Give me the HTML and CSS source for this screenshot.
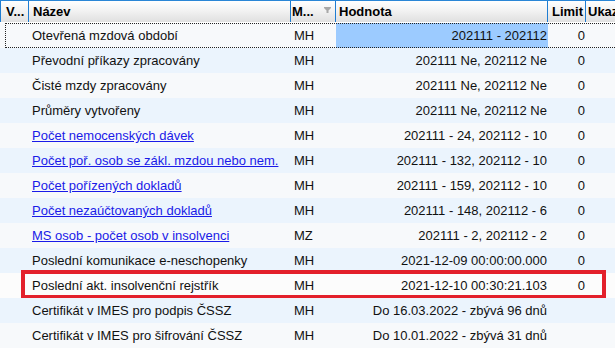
FILE: index.html
```html
<!DOCTYPE html>
<html lang="cs">
<head>
  <meta charset="UTF-8" />
  <title>Ukazatele</title>
  <link rel="stylesheet" href="styles.css">
</head>
<body>
<div class="grid">
  <div class="row head">
    <div class="cell">V...</div>
    <div class="cell">Název</div>
    <div class="cell">M...
      <svg class="filter" width="7" height="6" viewBox="0 0 7 6"><path d="M0 0h7v1L4.5 3.5V6h-2V3.5L0 1z" fill="#a8a8a8"/></svg>
    </div>
    <div class="cell">Hodnota</div>
    <div class="cell">Limit</div>
    <div class="cell">Ukazatel</div>
  </div>
  <div class="rows">
    <div class="row light focus">
      <div class="cell"></div>
      <div class="cell">Otevřená mzdová období</div>
      <div class="cell">MH</div>
      <div class="cell num sel">202111 - 202112</div>
      <div class="cell num">0</div>
      <div class="cell"></div>
    </div>
    <div class="row blue">
      <div class="cell"></div>
      <div class="cell">Převodní příkazy zpracovány</div>
      <div class="cell">MH</div>
      <div class="cell num">202111 Ne, 202112 Ne</div>
      <div class="cell num">0</div>
      <div class="cell"></div>
    </div>
    <div class="row light">
      <div class="cell"></div>
      <div class="cell">Čisté mzdy zpracovány</div>
      <div class="cell">MH</div>
      <div class="cell num">202111 Ne, 202112 Ne</div>
      <div class="cell num">0</div>
      <div class="cell"></div>
    </div>
    <div class="row blue">
      <div class="cell"></div>
      <div class="cell">Průměry vytvořeny</div>
      <div class="cell">MH</div>
      <div class="cell num">202111 Ne, 202112 Ne</div>
      <div class="cell num">0</div>
      <div class="cell"></div>
    </div>
    <div class="row light">
      <div class="cell"></div>
      <div class="cell"><a href="#">Počet nemocenských dávek</a></div>
      <div class="cell">MH</div>
      <div class="cell num">202111 - 24, 202112 - 10</div>
      <div class="cell num">0</div>
      <div class="cell"></div>
    </div>
    <div class="row blue">
      <div class="cell"></div>
      <div class="cell"><a href="#">Počet poř. osob se zákl. mzdou nebo nem.</a></div>
      <div class="cell">MH</div>
      <div class="cell num">202111 - 132, 202112 - 10</div>
      <div class="cell num">0</div>
      <div class="cell"></div>
    </div>
    <div class="row light">
      <div class="cell"></div>
      <div class="cell"><a href="#">Počet pořízených dokladů</a></div>
      <div class="cell">MH</div>
      <div class="cell num">202111 - 159, 202112 - 10</div>
      <div class="cell num">0</div>
      <div class="cell"></div>
    </div>
    <div class="row blue">
      <div class="cell"></div>
      <div class="cell"><a href="#">Počet nezaúčtovaných dokladů</a></div>
      <div class="cell">MH</div>
      <div class="cell num">202111 - 148, 202112 - 6</div>
      <div class="cell num">0</div>
      <div class="cell"></div>
    </div>
    <div class="row light">
      <div class="cell"></div>
      <div class="cell"><a href="#">MS osob - počet osob v insolvenci</a></div>
      <div class="cell">MZ</div>
      <div class="cell num">202111 - 2, 202112 - 2</div>
      <div class="cell num">0</div>
      <div class="cell"></div>
    </div>
    <div class="row blue">
      <div class="cell"></div>
      <div class="cell">Poslední komunikace e-neschopenky</div>
      <div class="cell">MH</div>
      <div class="cell num">2021-12-09 00:00:00.000</div>
      <div class="cell num">0</div>
      <div class="cell"></div>
    </div>
    <div class="row white marked">
      <div class="cell"></div>
      <div class="cell">Poslední akt. insolvenční rejstřík</div>
      <div class="cell">MH</div>
      <div class="cell num">2021-12-10 00:30:21.103</div>
      <div class="cell num">0</div>
      <div class="cell"></div>
    </div>
    <div class="row blue">
      <div class="cell"></div>
      <div class="cell">Certifikát v IMES pro podpis ČSSZ</div>
      <div class="cell">MH</div>
      <div class="cell num">Do 16.03.2022 - zbývá 96 dnů</div>
      <div class="cell num"></div>
      <div class="cell"></div>
    </div>
    <div class="row light">
      <div class="cell"></div>
      <div class="cell">Certifikát v IMES pro šifrování ČSSZ</div>
      <div class="cell">MH</div>
      <div class="cell num">Do 10.01.2022 - zbývá 31 dnů</div>
      <div class="cell num"></div>
      <div class="cell"></div>
    </div>
  </div>
</div>
</body>
</html>
```

FILE: styles.css
```css
* { box-sizing: border-box; margin: 0; padding: 0; }
html, body { width: 100%; height: 100%; background: #fff; overflow: hidden; }
body { font-family: "Liberation Sans", Arial, sans-serif; font-size: 13px; color: #111; }

.grid { width: 615px; }
.row {
  display: grid;
  grid-template-columns: 29px 262px 45px 212px 38px 1fr;
  height: 25px;
  position: relative;
}
.cell {
  display: flex; align-items: center;
  padding: 0 2px 0 3px;
  white-space: nowrap; overflow: hidden;
}
.cell.num { justify-content: flex-end; padding: 0 1px 0 2px; }

.head {
  height: 23px;
  border-top: 1px solid #2a86d6;
  border-bottom: 1px solid #fff;
  background: linear-gradient(#ffffff, #f4f4f4 40%, #e0e0e0);
}
.head .cell {
  font-weight: bold; color: #000;
  border-right: 1px solid #1f7dd2;
  position: relative;
  padding-left: 4px;
}
.head .cell:first-child { border-left: 1px solid #1f7dd2; padding-left: 5px; }
.head .cell:nth-child(3) { padding-left: 1px; }
.head .cell:nth-child(4) { padding-left: 3px; }
.head .cell:nth-child(5) { padding-left: 4px; }
.head .cell:last-child { border-right: none; padding-left: 2px; }
.filter { position: absolute; right: 4px; top: 6px; }

.rows { border-left: 1px solid #3b8fdb; margin-left: 2px; }
.rows .row { margin-left: -3px; }
.light { background: #f7f9fb; }
.blue { background: #ebf4fd; }
.white { background: #fcfcfc; }
.sel { background: #9ccbff; }

a { color: #1a1ae8; text-decoration: underline; }

.focus::after {
  content: "";
  position: absolute; left: 5px; top: 0; right: -4px; bottom: 0;
  border: 1px dotted #222;
  pointer-events: none;
}
.marked::after {
  content: "";
  position: absolute; left: 21px; top: -3px; right: 9px; bottom: -1px;
  border: 4px solid #e3202b;
  pointer-events: none;
}
```
